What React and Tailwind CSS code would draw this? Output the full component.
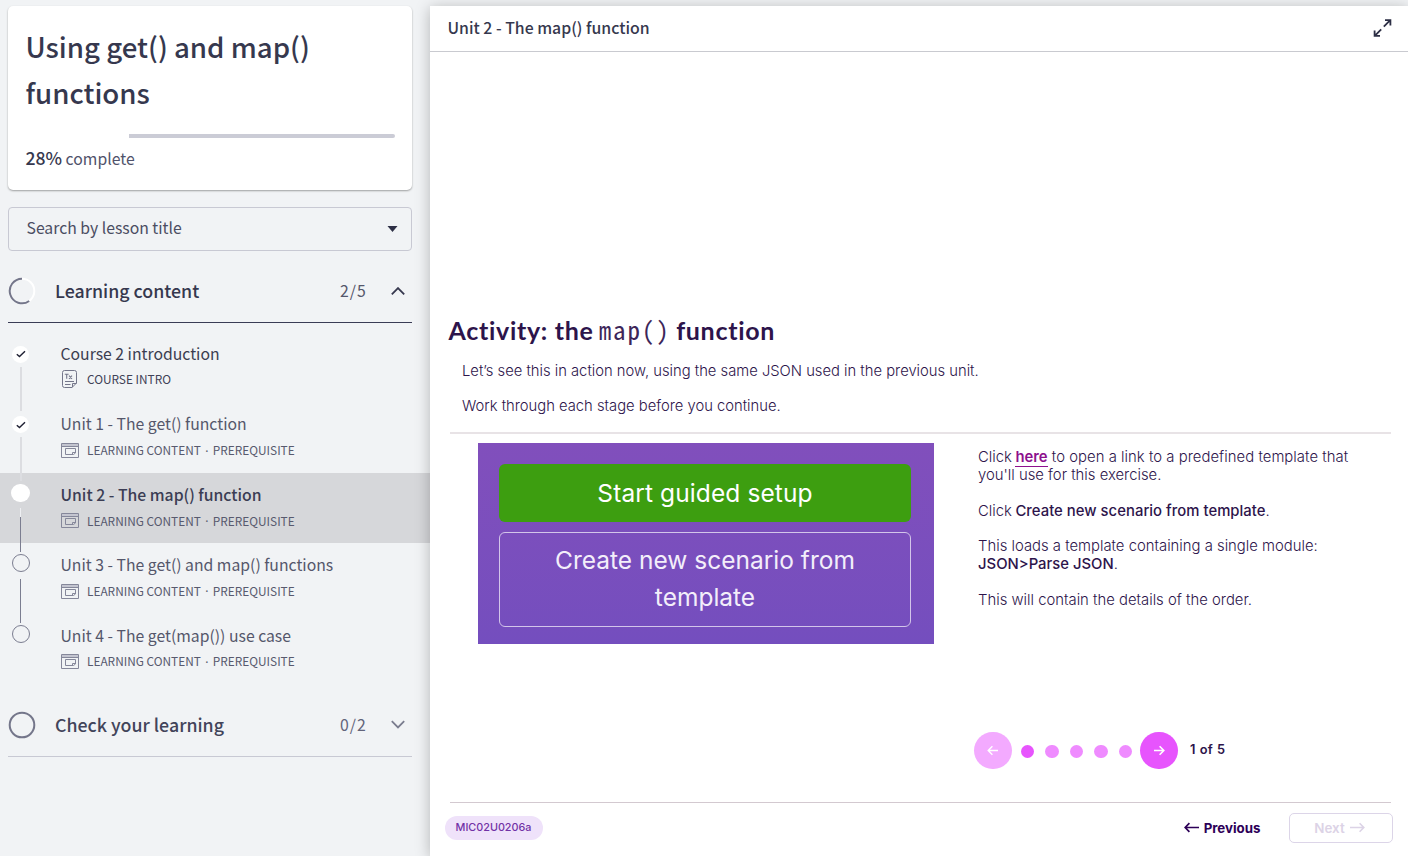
const ui = "font-['Noto_Sans_CJK_SC',sans-serif]";
const body = "font-['Inter',sans-serif]";

const lessons = [
  { title: "Course 2 introduction", kind: "COURSE INTRO", state: "done", dark: true },
  { title: "Unit 1 - The get() function", kind: "LEARNING CONTENT", prerequisite: true, state: "done" },
  { title: "Unit 2 - The map() function", kind: "LEARNING CONTENT", prerequisite: true, state: "current" },
  { title: "Unit 3 - The get() and map() functions", kind: "LEARNING CONTENT", prerequisite: true, state: "todo" },
  { title: "Unit 4 - The get(map()) use case", kind: "LEARNING CONTENT", prerequisite: true, state: "todo", last: true },
];

function CheckIcon() {
  return (
    <svg width="10" height="8" viewBox="0 0 10 8" fill="none" stroke="#1f2033" strokeWidth="1.4">
      <path d="M0.8 4.2 3.5 6.6 9 1.2" />
    </svg>
  );
}

function Chevron({ up }) {
  return (
    <svg width="14" height="9" viewBox="0 0 14 9" fill="none" stroke={up ? "#36384e" : "#7a7c8e"} strokeWidth="1.8">
      <path d={up ? "M0.8 7.3 7 1.1 13.2 7.3" : "M0.8 1.2 7 7.4 13.2 1.2"} />
    </svg>
  );
}

function DocIcon() {
  return (
    <svg width="18" height="18" viewBox="0 0 18 18" fill="none" stroke="#74768a" strokeWidth="1">
      <path d="M3.5 0.5H13.5Q15.5 0.5 15.5 2.5V13L11 17.5H3.5Q1.5 17.5 1.5 15.5V2.5Q1.5 0.5 3.5 0.5Z" />
      <path d="M15.5 13.5H11.5V17.3M4 11.5H13M4 14.5H9.5" />
      <path d="M3.8 4.3H7.6M5.7 4.3V8.7M8 5.6 11 8.8M11 5.6 8 8.8" strokeWidth="1.1" />
    </svg>
  );
}

function ContentIcon() {
  return (
    <svg width="18" height="15" viewBox="0 0 18 15" fill="none" stroke="#85879a" strokeWidth="1">
      <path d="M0.5 0.5H17.5V14.5H0.5Z" />
      <path d="M1 1H17V3H1Z" fill="#c4c5d0" stroke="none" />
      <path d="M0.5 3.5H17.5" />
      <path d="M4.5 5.5H14.5V10L12.5 11.5H4.5Z" />
      <path d="M14.5 9.5H11.5V11.5" />
    </svg>
  );
}

function Marker({ state }) {
  if (state === "done")
    return <div className="mt-[13.5px] mb-[3.5px] flex size-[17.5px] shrink-0 items-center justify-center rounded-full bg-white"><CheckIcon /></div>;
  if (state === "current")
    return <div className="mt-[11px] mb-[5.5px] size-[18.5px] shrink-0 rounded-full bg-white" />;
  return <div className="mt-[11px] mb-[6.5px] size-[18px] shrink-0 rounded-full border border-[#7b7d90]" />;
}

function Connector({ state }) {
  if (state === "done") return <div className="h-11 w-[2px] shrink-0 bg-[#dcdde1]" />;
  if (state === "current")
    return (
      <div className="flex shrink-0 flex-col">
        <div className="h-[9px] w-px bg-[#eeeff2]" />
        <div className="h-[35px] w-px bg-[#7b7d90]" />
      </div>
    );
  return <div className="h-11 w-px shrink-0 bg-[#7b7d90]" />;
}

function Lesson({ lesson }) {
  const current = lesson.state === "current";
  return (
    <li className={`flex h-[70.4px] ${current ? "bg-[#d6d7da]" : ""}`}>
      <div className="relative z-10 flex h-full w-[41px] flex-col items-center">
        <Marker state={lesson.state} />
        {!lesson.last && <Connector state={lesson.state} />}
      </div>
      <div className="pt-[10px] pl-[19.5px]">
        <div className={`h-6 text-[15.76px] leading-6 whitespace-nowrap ${current ? "font-medium text-[#3b3d54]" : lesson.dark ? "text-[#3b3d50]" : "text-[#55576b]"}`}>{lesson.title}</div>
        <div className={`flex h-[18px] items-center ${lesson.dark ? "mt-[4px]" : "mt-[5px]"}`}>
          <div className="flex w-[26.5px] shrink-0">{lesson.dark ? <DocIcon /> : <ContentIcon />}</div>
          <div className={`flex text-[11.85px] leading-[18px] whitespace-nowrap ${lesson.dark ? "text-[#3f4156]" : "text-[#585a6e]"}`}>
            <span>{lesson.kind}</span>
            {lesson.prerequisite && <span className="w-[12px] pt-[0.5px] text-center font-['Noto_Sans',sans-serif]">·</span>}
            {lesson.prerequisite && <span>PREREQUISITE</span>}
          </div>
        </div>
      </div>
    </li>
  );
}

function Sidebar() {
  return (
    <aside className={`flex w-[430px] shrink-0 flex-col pt-[6px] ${ui}`}>
      <section className="mx-2 h-[184px] w-[404px] rounded-[5px] bg-white px-[17.5px] pt-[17px] shadow-[0_1px_2px_rgba(0,0,0,0.35)]">
        <h1 className="text-[27.65px] leading-[46px] font-medium text-[#36384e]">Using get() and map() functions</h1>
        <div className="mt-[19px] flex h-1">
          <div className="w-[103.5px] bg-white" />
          <div className="w-[266px] rounded-r-sm bg-[#cbccd6]" />
        </div>
        <p className="mt-[6px] text-[15.76px] leading-7 text-[#50526a]"><span className="text-[17.6px] font-medium text-[#36384e]">28%</span> complete</p>
      </section>

      <button className="mx-2 mt-[17px] flex h-[44px] w-[404px] items-center justify-between rounded-[4px] border border-[#c8c9d3] pr-[13px] pl-[17.5px] text-left text-[15.76px] text-[#4b4d62]">
        <span className="mb-[2px] leading-6">Search by lesson title</span>
        <svg width="11" height="6" viewBox="0 0 11 6"><path d="M0.5 0H10.5L5.5 6Z" fill="#2d2f45" /></svg>
      </button>

      <section className="mx-2 mt-[16px] flex h-[56px] w-[404px] items-center border-b border-[#3a3c55] pb-[7px]">
        <svg width="28" height="28" viewBox="0 0 28 28" fill="none" strokeWidth="2">
          <circle cx="14" cy="14" r="12.3" stroke="#fff" />
          <path d="M14 1.7A12.3 12.3 0 1 0 21.2 24" stroke="#74768a" />
        </svg>
        <h2 className="mb-[2px] ml-[19px] flex-1 text-[17.8px] leading-7 font-medium text-[#36384e]">Learning content</h2>
        <span className="mb-[1px] w-[51px] text-[15.8px] tracking-[1px] text-[#55576b]">2/5</span>
        <Chevron up />
        <span className="w-[7px]" />
      </section>

      <ul className="mt-[9px] flex flex-col">
        {lessons.map((lesson) => <Lesson key={lesson.title} lesson={lesson} />)}
      </ul>

      <section className="mx-2 mt-[9px] flex h-[64px] w-[404px] items-center border-b border-[#c8c9d3] pt-[1px]">
        <svg width="28" height="28" viewBox="0 0 28 28" fill="none" strokeWidth="2">
          <circle cx="14" cy="14" r="12.3" stroke="#74768a" />
        </svg>
        <h2 className="mb-[1px] ml-[19px] flex-1 text-[17.8px] leading-7 font-medium text-[#42445a]">Check your learning</h2>
        <span className="mb-[1px] w-[51px] text-[15.8px] tracking-[1px] text-[#62647a]">0/2</span>
        <Chevron />
        <span className="w-[7px]" />
      </section>
    </aside>
  );
}

function Arrow({ width, left, strokeWidth, color }) {
  return (
    <svg width={width} height="11" viewBox={`0 0 ${width} 11`} fill="none" stroke={color} strokeWidth={strokeWidth}>
      <path d={left ? `M${width} 5.5H1.2M5.4 1.2 1.2 5.5 5.4 9.8` : `M0 5.5H${width - 1.2}M${width - 5.4} 1.2 ${width - 1.2} 5.5 ${width - 5.4} 9.8`} />
    </svg>
  );
}

function Pager() {
  return (
    <div className="flex items-center pl-[544px]">
      <div className="flex size-[37.5px] items-center justify-center rounded-full bg-[#f3aaff]">
        <Arrow width={11} left strokeWidth={1.4} color="#fff" />
      </div>
      <div className="mt-[2px] ml-[9.5px] flex gap-[11px]">
        <span className="size-[13.4px] rounded-full bg-[#e754fd]" />
        <span className="size-[13.4px] rounded-full bg-[#ef8bff]" />
        <span className="size-[13.4px] rounded-full bg-[#ef8bff]" />
        <span className="size-[13.4px] rounded-full bg-[#ef8bff]" />
        <span className="size-[13.4px] rounded-full bg-[#ef8bff]" />
      </div>
      <div className="ml-[8.5px] flex size-[37.5px] items-center justify-center rounded-full bg-[#e754fd]">
        <Arrow width={11} strokeWidth={1.6} color="#fff" />
      </div>
      <span className="ml-[12px] text-[12.8px] leading-5 font-semibold tracking-[0.1px] text-[#2d144b] [word-spacing:1px]">1 of 5</span>
    </div>
  );
}

export default function App() {
  return (
    <div className="flex h-[856px] w-[1408px] overflow-hidden bg-[#f1f3f5]">
      <Sidebar />
      <div className="flex min-w-0 flex-1 flex-col pt-[6px]">
        <main className={`flex flex-1 flex-col bg-white shadow-[0_2px_14px_rgba(0,0,0,0.26)] ${body}`}>
          <header className={`flex h-[46px] shrink-0 items-center justify-between border-b border-[#c9cad0] pr-[16px] pb-[2px] pl-[17.5px] ${ui}`}>
            <h2 className="text-[15.84px] leading-6 font-medium text-[#36384e]">Unit 2 - The map() function</h2>
            <svg width="19" height="18" viewBox="0 0 19 18" fill="none" stroke="#2d2f45" strokeWidth="1.8">
              <path d="M10.8 7.6 17 1.4M12 1.2H17.4V6.6M8.2 10.4 2 16.6M1.6 11.4V16.8H7" />
            </svg>
          </header>

          <h1 className="mt-[261px] flex h-8 items-baseline pl-[18.5px] text-[25px] leading-8 font-bold tracking-[0.7px] whitespace-pre text-[#2d144b] font-['Lato',sans-serif]">
            <span>Activity: the</span>
            <code className="ml-[5px] w-[77.5px] text-[25px] leading-8 font-light tracking-[1.9px] text-[#3d2659] font-['Noto_Sans_Mono_CJK_SC','Liberation_Mono',monospace]">map()</code>
            <span>function</span>
          </h1>
          <div className="mt-[17px] pl-8 text-[14.78px] leading-[18px] font-light text-[#2d144b]">
            <p>Let’s see this in action now, using the same JSON used in the previous unit.</p>
            <p className="mt-[17px]">Work through each stage before you continue.</p>
          </div>

          <div className="mx-[20px] mt-[17px] w-[941px] border-t-2 border-[#e8e3e6]" />

          <div className="mt-[9px] flex h-[201px] pl-12">
            <div className="flex h-[200.5px] w-[455.5px] flex-col gap-[10px] bg-linear-to-b from-[#814fbc] to-[#744ebe] px-[21px] pt-[21px] text-center text-[24.5px] leading-[37px] text-white">
              <div className="flex h-[58px] w-[412px] items-center justify-center rounded-md bg-[#3d9e10] tracking-[0.1px]">Start guided setup</div>
              <div className="flex h-[95px] w-[412px] items-center justify-center rounded-md border border-[#d3c5ea] px-10 pb-[1px] text-[#f3eefa]">Create new scenario from template</div>
            </div>
            <div className="ml-[44.5px] pt-[5px] text-[14.85px] leading-[18px] font-light whitespace-nowrap text-[#2d144b]">
              <p>Click <a className="-ml-[0.7px] border-b border-[#8d108d] font-semibold text-[#8d108d]">here</a><span className="tracking-[0.04px]"> to open a link to a predefined template that</span><br />you'll use for this exercise.</p>
              <p className="mt-[18px]">Click <b className="-ml-[0.7px] font-medium tracking-[0.03px]">Create new scenario from template</b>.</p>
              <p className="mt-[17px]">This loads a template containing a single module:<br /><b className="font-medium">JSON&gt;Parse JSON</b>.</p>
              <p className="mt-[18px]">This will contain the details of the order.</p>
            </div>
          </div>

          <div className="mt-[87.5px]"><Pager /></div>

          <div className="mx-[20px] mt-[32.5px] w-[941px] border-t border-[#d3c9d0]" />

          <footer className="mt-[10px] flex h-[30px] items-center pr-[15.5px] pl-[15px]">
            <span className="flex h-6 w-[98px] items-center justify-center rounded-full bg-[#efe2fa] pt-[1px] pr-[1px] text-[10.8px] leading-6 font-medium text-[#7232a6]">MIC02U0206a</span>
            <button className="ml-auto flex items-center gap-[5px] text-[13.3px] leading-5 font-bold text-[#2d0057]">
              <Arrow width={15} left strokeWidth={1.7} color="#2d0057" />
              Previous
            </button>
            <button className="ml-[28px] flex h-[30px] w-[104px] items-center justify-center gap-[5px] rounded-[5px] border border-[#dcd5e8] pr-[2px] text-[13.4px] leading-5 font-semibold text-[#dcd3e6]">
              Next
              <Arrow width={15} strokeWidth={1.6} color="#dcd3e6" />
            </button>
          </footer>
        </main>
      </div>
    </div>
  );
}
